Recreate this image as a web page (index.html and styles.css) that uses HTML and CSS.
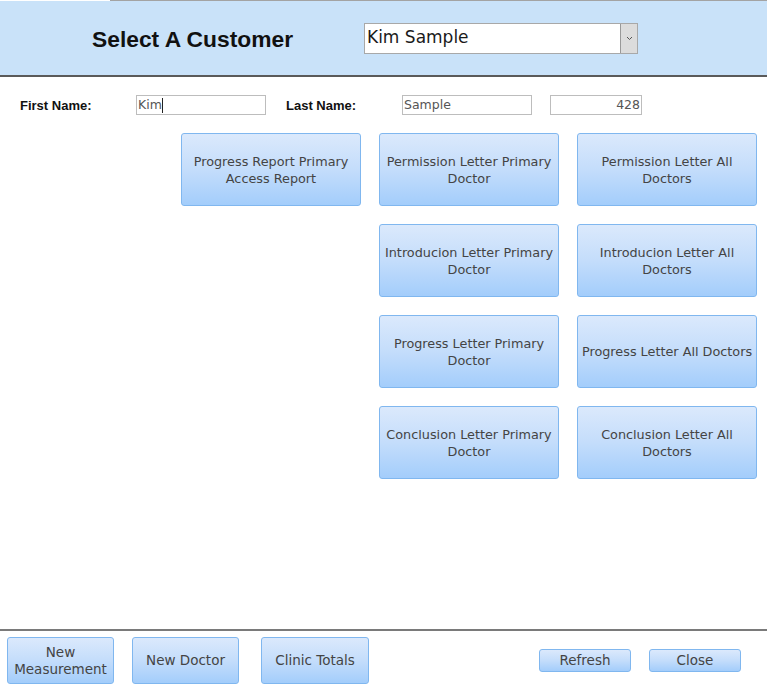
FILE: index.html
```html
<!DOCTYPE html>
<html>
<head>
<meta charset="utf-8">
<link rel="stylesheet" href="styles.css">
</head>
<body>
<div class="page">
  <div class="topstrip"></div>
  <header class="header">
    <h1 class="title">Select A Customer</h1>
    <div class="combo">
      <span class="combo-text">Kim Sample</span>
      <span class="combo-btn">
        <svg width="7" height="5" viewBox="0 0 7 5"><path d="M1 1 L3.5 3.5 L6 1" fill="none" stroke="#555" stroke-width="1"/></svg>
      </span>
    </div>
  </header>
  <div class="fields">
    <label class="lbl lbl-first">First Name:</label>
    <div class="inp inp-first">Kim<span class="caret"></span></div>
    <label class="lbl lbl-last">Last Name:</label>
    <div class="inp inp-last">Sample</div>
    <div class="inp inp-num">428</div>
  </div>
  <div class="grid">
    <button class="btn">Progress Report Primary Access Report</button>
    <button class="btn">Permission Letter Primary Doctor</button>
    <button class="btn">Permission Letter All Doctors</button>
    <div></div>
    <button class="btn">Introducion Letter Primary Doctor</button>
    <button class="btn">Introducion Letter All Doctors</button>
    <div></div>
    <button class="btn">Progress Letter Primary Doctor</button>
    <button class="btn">Progress Letter All Doctors</button>
    <div></div>
    <button class="btn">Conclusion Letter Primary Doctor</button>
    <button class="btn">Conclusion Letter All Doctors</button>
  </div>
  <div class="spacer"></div>
  <footer class="footer">
    <button class="btn fbtn fb-measure">New Measurement</button>
    <button class="btn fbtn fb-doctor">New Doctor</button>
    <button class="btn fbtn fb-totals">Clinic Totals</button>
    <div class="fspace"></div>
    <button class="btn sbtn">Refresh</button>
    <button class="btn sbtn sb-close">Close</button>
  </footer>
</div>
</body>
</html>
```
FILE: styles.css
```css
* { box-sizing: border-box; }
html, body { margin: 0; padding: 0; background: #fff; }
body { font-family: "DejaVu Sans", sans-serif; color: #222; }
.page { width: 767px; height: 700px; display: flex; flex-direction: column; }
.topstrip { height: 1px; background: linear-gradient(to right, #ffffff 0, #ffffff 110px, #a3a3a3 110px); }
.header {
  height: 76px;
  background: #c9e2f9;
  border-bottom: 2px solid #5a5a5a;
  display: flex;
  align-items: flex-start;
  padding-left: 92px;
}
.title {
  margin: 0;
  width: 272px;
  font-family: "Liberation Sans", Arial, sans-serif;
  font-size: 22.8px;
  font-weight: bold;
  color: #111;
  padding-top: 25px;
  line-height: 26px;
}
.combo {
  margin-top: 22px;
  width: 274px;
  height: 31px;
  background: #fff;
  border: 1px solid #a8a8a8;
  display: flex;
}
.combo-text { flex: 1; font-size: 17px; line-height: 26px; padding-left: 2px; color: #1a1a1a; }
.combo-btn {
  width: 17px;
  background: #dcdcdc;
  border-left: 1px solid #999;
  display: flex; align-items: center; justify-content: center;
}
.fields { display: flex; align-items: center; height: 20px; margin-top: 18px; }
.lbl { font-family: "Liberation Sans", Arial, sans-serif; font-size: 13px; font-weight: bold; color: #111; }
.lbl-first { margin-left: 20px; width: 116px; }
.lbl-last { margin-left: 20px; width: 116px; }
.inp {
  height: 20px;
  border: 1px solid #bdbdbd;
  font-size: 12.5px;
  line-height: 18px;
  padding-left: 1px;
  color: #555;
}
.inp-first { width: 130px; display: flex; align-items: center; }
.caret { width: 1px; height: 15px; background: #222; margin-left: 0; }
.inp-last { width: 130px; }
.inp-num { width: 92px; margin-left: 18px; text-align: right; padding-right: 1px; }
.grid {
  margin-top: 18px;
  margin-left: 181px;
  display: grid;
  grid-template-columns: 180px 180px 180px;
  grid-auto-rows: 73px;
  gap: 18px;
}
.btn {
  font-family: "DejaVu Sans", sans-serif;
  font-size: 12.8px;
  color: #444;
  line-height: 17px;
  background: linear-gradient(to bottom, #dbe9fc 0%, #c4ddfb 50%, #a3cdfb 100%);
  border: 1px solid #80b7ef;
  border-radius: 3px;
  padding: 0 2px;
  text-align: center;
  margin: 0;
}
.spacer { flex: 1; }
.footer {
  height: 71px;
  border-top: 2px solid #7a7a7a;
  display: flex;
  align-items: flex-start;
  padding-left: 7px;
}
.fbtn { width: 107px; height: 47px; margin-top: 6px; font-size: 13.5px; }
.fb-doctor { margin-left: 18px; }
.fb-totals { margin-left: 22px; width: 108px; }
.fspace { width: 170px; }
.sbtn { width: 92px; height: 23px; margin-top: 18px; line-height: 19px; font-size: 13.5px; }
.sb-close { margin-left: 18px; }
```
